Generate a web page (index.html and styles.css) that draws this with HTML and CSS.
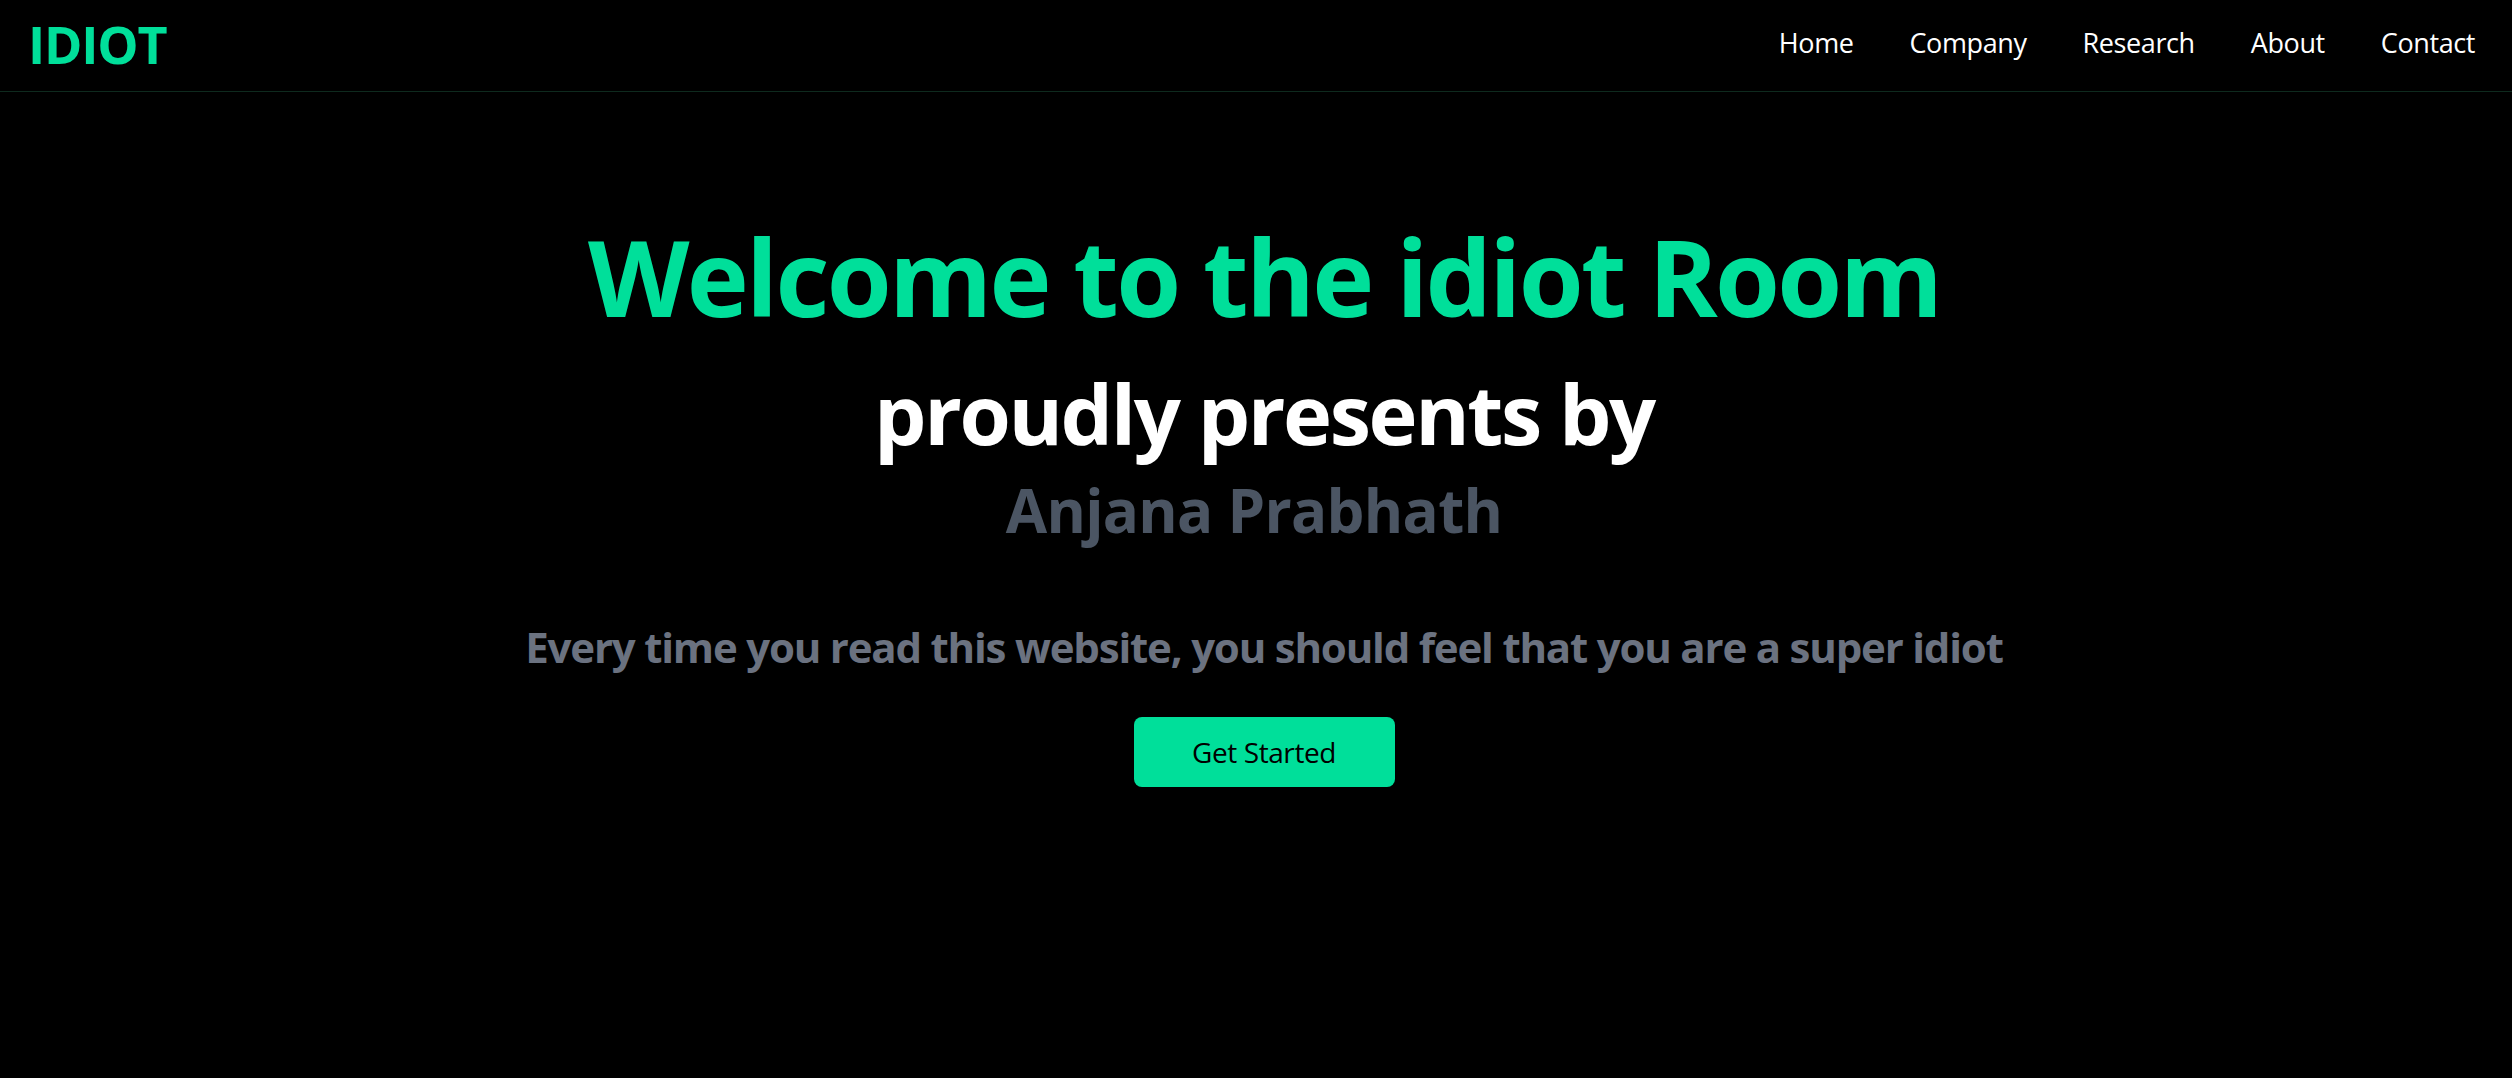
FILE: index.html
```html
<!DOCTYPE html>
<html>
<head>
<meta charset="utf-8">
<title>IDIOT</title>
<link rel="stylesheet" href="styles.css">
</head>
<body>
<header class="nav">
  <div class="logo">IDIOT</div>
  <ul class="menu">
    <li>Home</li>
    <li>Company</li>
    <li>Research</li>
    <li>About</li>
    <li>Contact</li>
  </ul>
</header>
<main class="hero">
  <h1 class="title">Welcome to the idiot Room</h1>
  <h2 class="sub">proudly presents by</h2>
  <p class="name">Anjana Prabhath</p>
  <p class="tagline">Every time you read this website, you should feel that you are a super idiot</p>
  <button class="cta">Get Started</button>
</main>
</body>
</html>
```
FILE: styles.css
```css
* { box-sizing: border-box; }
html, body { margin: 0; padding: 0; background: #000; }
body { font-family: "Open Sans", "Noto Sans", sans-serif; color: #fff; height: 1078px; overflow: hidden; }
.nav { height: 92px; border-bottom: 1px solid #0e2a1e; display: flex; align-items: center; justify-content: space-between; padding: 0 37px 0 28px; }
.logo { color: #00df9a; font-weight: 700; font-size: 52px; line-height: 1; letter-spacing: -1.2px; margin-top: -3px; }
.menu { list-style: none; margin: -6px 0 0; padding: 0; display: flex; gap: 56px; font-size: 27px; letter-spacing: -0.4px; }
.hero { display: flex; flex-direction: column; align-items: center; text-align: center; padding: 122px 0 0 16px; }
.title { margin: 0; color: #00df9a; font-size: 105px; line-height: 126px; font-weight: 700; letter-spacing: -2.7px; }
.sub { margin: 23px 0 0; color: #fff; font-size: 83px; line-height: 100px; font-weight: 700; letter-spacing: -2.4px; }
.name { margin: 11px 20px 0 0; color: #4b5563; font-size: 60px; line-height: 72px; font-weight: 700; letter-spacing: -0.7px; }
.tagline { margin: 76px 0 0; color: #6b7280; font-size: 42px; line-height: 50px; font-weight: 700; letter-spacing: -1.2px; }
.cta { margin-top: 45px; width: 261px; height: 70px; border: 0; border-radius: 8px; background: #00df9a; color: #000; font-family: inherit; font-size: 28px; font-weight: 500; letter-spacing: -0.4px; }
```
